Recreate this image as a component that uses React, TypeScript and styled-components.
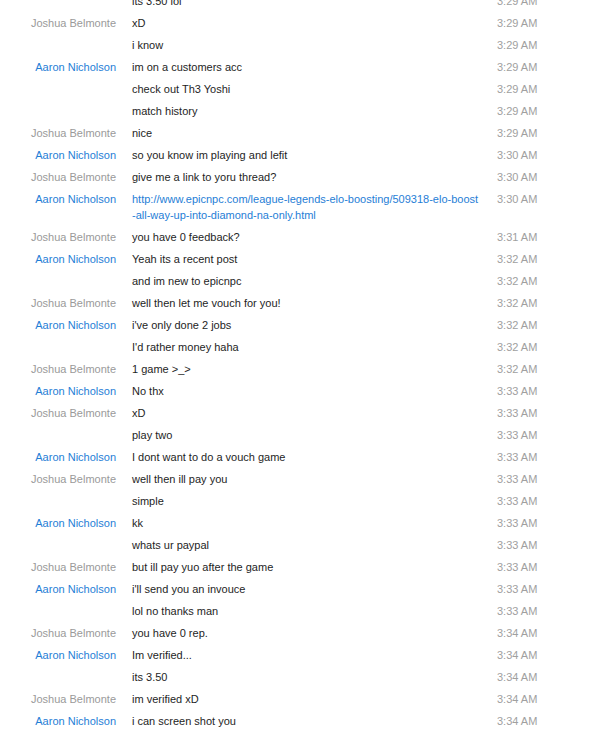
import styled, { createGlobalStyle } from "styled-components";

type Sender = "joshua" | "aaron" | null;

interface Message {
  from: Sender;
  lines: string[];
  time: string;
  link?: boolean;
}

const names = {
  joshua: "Joshua Belmonte",
  aaron: "Aaron Nicholson",
};

const messages: Message[] = [
  { from: null, lines: ["its 3.50 lol"], time: "3:29 AM" },
  { from: "joshua", lines: ["xD"], time: "3:29 AM" },
  { from: null, lines: ["i know"], time: "3:29 AM" },
  { from: "aaron", lines: ["im on a customers acc"], time: "3:29 AM" },
  { from: null, lines: ["check out Th3 Yoshi"], time: "3:29 AM" },
  { from: null, lines: ["match history"], time: "3:29 AM" },
  { from: "joshua", lines: ["nice"], time: "3:29 AM" },
  { from: "aaron", lines: ["so you know im playing and lefit"], time: "3:30 AM" },
  { from: "joshua", lines: ["give me a link to yoru thread?"], time: "3:30 AM" },
  {
    from: "aaron",
    lines: [
      "http://www.epicnpc.com/league-legends-elo-boosting/509318-elo-boost",
      "-all-way-up-into-diamond-na-only.html",
    ],
    time: "3:30 AM",
    link: true,
  },
  { from: "joshua", lines: ["you have 0 feedback?"], time: "3:31 AM" },
  { from: "aaron", lines: ["Yeah its a recent post"], time: "3:32 AM" },
  { from: null, lines: ["and im new to epicnpc"], time: "3:32 AM" },
  { from: "joshua", lines: ["well then let me vouch for you!"], time: "3:32 AM" },
  { from: "aaron", lines: ["i've only done 2 jobs"], time: "3:32 AM" },
  { from: null, lines: ["I'd rather money haha"], time: "3:32 AM" },
  { from: "joshua", lines: ["1 game >_>"], time: "3:32 AM" },
  { from: "aaron", lines: ["No thx"], time: "3:33 AM" },
  { from: "joshua", lines: ["xD"], time: "3:33 AM" },
  { from: null, lines: ["play two"], time: "3:33 AM" },
  { from: "aaron", lines: ["I dont want to do a vouch game"], time: "3:33 AM" },
  { from: "joshua", lines: ["well then ill pay you"], time: "3:33 AM" },
  { from: null, lines: ["simple"], time: "3:33 AM" },
  { from: "aaron", lines: ["kk"], time: "3:33 AM" },
  { from: null, lines: ["whats ur paypal"], time: "3:33 AM" },
  { from: "joshua", lines: ["but ill pay yuo after the game"], time: "3:33 AM" },
  { from: "aaron", lines: ["i'll send you an invouce"], time: "3:33 AM" },
  { from: null, lines: ["lol no thanks man"], time: "3:33 AM" },
  { from: "joshua", lines: ["you have 0 rep."], time: "3:34 AM" },
  { from: "aaron", lines: ["Im verified..."], time: "3:34 AM" },
  { from: null, lines: ["its 3.50"], time: "3:34 AM" },
  { from: "joshua", lines: ["im verified xD"], time: "3:34 AM" },
  { from: "aaron", lines: ["i can screen shot you"], time: "3:34 AM" },
];

const App = () => {
  return (
    <>
      <GlobalStyle />
      <StyledLog>
        {messages.map((m, i) => (
          <StyledRow key={i}>
            <StyledName $from={m.from}>{m.from ? names[m.from] : ""}</StyledName>
            <StyledText $link={m.link}>
              {m.lines.map((l, j) => (
                <div key={j}>{l}</div>
              ))}
            </StyledText>
            <StyledTime>{m.time}</StyledTime>
          </StyledRow>
        ))}
      </StyledLog>
    </>
  );
};

const GlobalStyle = createGlobalStyle`
  html, body {
    margin: 0;
    background: #ffffff;
    overflow: hidden;
  }
  body {
    font-family: "Liberation Sans", Arial, sans-serif;
    font-size: 11px;
  }
`;

const StyledLog = styled.div`
  margin-top: -10px;
  display: flex;
  flex-direction: column;
`;

const StyledRow = styled.div`
  display: grid;
  grid-template-columns: 116px 353px auto;
  column-gap: 16px;
  padding: 3px 0;
  line-height: 16px;

  & > :last-child {
    margin-left: -4px;
  }
`;

const StyledName = styled.div<{ $from: Sender }>`
  text-align: right;
  white-space: nowrap;
  color: ${(p) => (p.$from === "aaron" ? "#1f7ed6" : "#9a9a9a")};
`;

const StyledText = styled.div<{ $link?: boolean }>`
  color: ${(p) => (p.$link ? "#1f7ed6" : "#1e1e1e")};
  white-space: nowrap;
`;

const StyledTime = styled.div`
  color: #a0a0a0;
  white-space: nowrap;
`;

export default App;
